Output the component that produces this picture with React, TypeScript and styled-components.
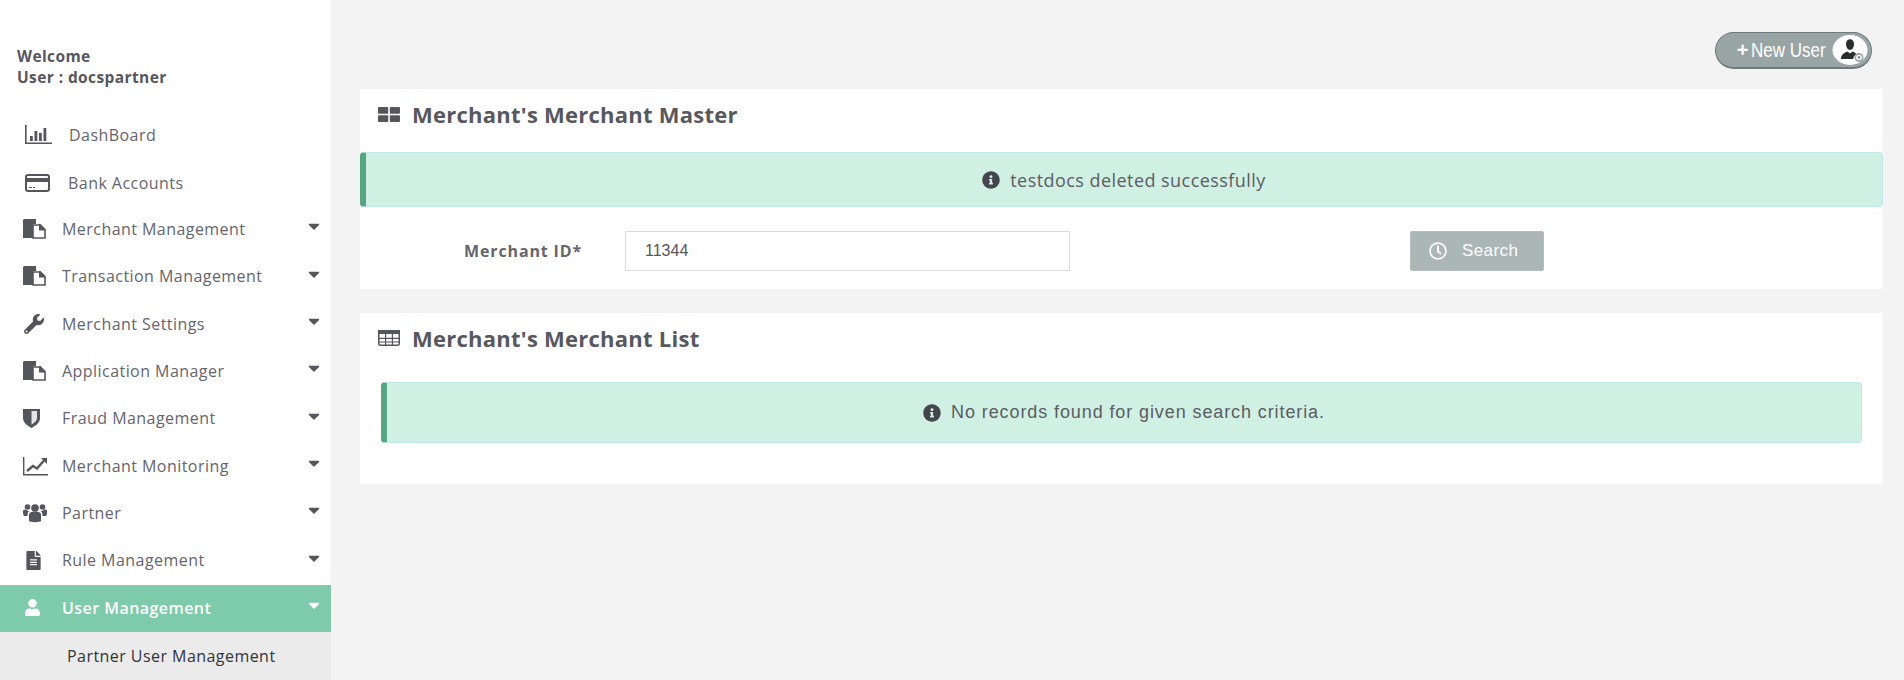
import styled, { createGlobalStyle } from 'styled-components'
import { FaCaretDown, FaInfoCircle, FaUser, FaWrench, FaFileAlt, FaRegClock } from 'react-icons/fa'

const GlobalStyle = createGlobalStyle`
html, body {
  margin: 0;
  padding: 0;
  height: 680px;
  overflow: hidden;
  background: #f3f3f3;
  font-family: 'Open Sans', sans-serif;
}
* { box-sizing: border-box; }
`

const Page = styled.div`
display: flex;
width: 1904px;
height: 680px;
overflow: hidden;
`

const Sidebar = styled.aside`
width: 331px;
flex: none;
background: #fff;
padding-top: 46px;
color: #5e5e66;
`

const Welcome = styled.div`
padding-left: 17px;
height: 65.5px;
font-size: 15.5px;
font-weight: 700;
letter-spacing: 0.4px;
line-height: 21px;
color: #575760;
`

const NavRow = styled.div<{ $active?: boolean; $flat: boolean; $textX: number; $iconX: number }>`
height: 47.35px;
display: flex;
align-items: center;
position: relative;
padding: 0 0 ${p => (p.$flat ? 0 : 2)}px ${p => p.$iconX}px;
font-size: 16px;
letter-spacing: 0.45px;
background: ${p => (p.$active ? '#7dcbaa' : 'transparent')};
color: ${p => (p.$active ? '#fff' : '#65656d')};
font-weight: ${p => (p.$active ? 600 : 400)};
.label {
  position: absolute;
  left: ${p => p.$textX}px;
}
.caret {
  position: absolute;
  left: 305px;
  top: 11px;
  font-size: 18px;
  color: ${p => (p.$active ? '#fff' : '#55555c')};
}
`

const SubRow = styled.div`
height: 48px;
background: #ebebeb;
padding: 0 0 0 67px;
display: flex;
align-items: center;
font-size: 16px;
letter-spacing: 0.45px;
color: #33333a;
`

const Main = styled.main`
flex: 1;
padding: 32px 21px 0 29px;
display: flex;
flex-direction: column;
`

const TopBar = styled.div`
height: 57px;
display: flex;
justify-content: flex-end;
padding-right: 11px;
flex: none;
`

const NewUserButton = styled.button`
width: 157px;
height: 37px;
padding: 0 3px 0 18px;
border: 1px solid #6f7a7a;
border-bottom-width: 2px;
border-radius: 19px;
background: #99a5a4;
color: #fff;
display: flex;
align-items: center;
font-family: 'Liberation Sans', sans-serif;
font-size: 20px;
.plus {
  font-weight: 700;
  width: 17px;
}
.text {
  display: inline-block;
  width: 81px;
  text-align: left;
  white-space: nowrap;
  transform: scaleX(0.85);
  transform-origin: left center;
}
svg { flex: none; }
`

const Panel = styled.section`
background: #fff;
margin-bottom: 24px;
`

const PanelHeader = styled.h2<{ $height: number; $pull: number }>`
margin: 0;
height: ${p => p.$height}px;
padding: 0 0 ${p => p.$pull}px 18px;
display: flex;
align-items: center;
gap: 12px;
font-size: 22px;
font-weight: 700;
letter-spacing: 0.25px;
color: #58585e;
svg { flex: none; }
`

const Alert = styled.div<{ $inset?: boolean; $sans?: boolean }>`
height: ${p => (p.$inset ? 61 : 55)}px;
margin: ${p => (p.$inset ? '0 21px 41px 21px' : '0')};
background: #d1f0e4;
border: 1px solid #bfe8ea;
border-left: 6px solid #57a683;
border-radius: 4px;
display: flex;
align-items: center;
justify-content: center;
gap: 10px;
color: #5c5c62;
font-family: ${p => (p.$sans ? "'Liberation Sans', sans-serif" : "'Open Sans', sans-serif")};
font-size: 18px;
letter-spacing: ${p => (p.$sans ? 0.9 : 0.45)}px;
svg { color: #45454d; font-size: 18px; flex: none; }
`

const FormRow = styled.div`
height: 82px;
padding-top: 24px;
display: flex;
align-items: flex-start;
`

const FieldLabel = styled.label`
width: 222px;
height: 40px;
line-height: 40px;
text-align: right;
font-size: 16px;
font-weight: 700;
letter-spacing: 0.85px;
color: #66666c;
`

const TextInput = styled.input`
margin-left: 43px;
width: 445px;
height: 40px;
padding: 0 19px;
border: 1px solid #dcdcdc;
background: #fff;
font-family: 'Liberation Sans', sans-serif;
font-size: 16px;
color: #55555c;
`

const SearchButton = styled.button`
margin-left: 340px;
width: 134px;
height: 40px;
border: 1px solid #b4bebe;
border-radius: 2px;
background: #abb7b7;
color: #fff;
display: flex;
align-items: center;
padding: 0 0 0 18px;
gap: 15px;
font-family: 'Liberation Sans', sans-serif;
font-size: 17px;
letter-spacing: 0.4px;
svg { font-size: 18px; }
`

const BarsIcon = () => (
  <svg width="27" height="20" viewBox="0 0 27 20">
    <path fill="#55555c" d="M0 0h1.6v17.500H27v1.600H0zM5 11h2.800v5H5zM9.500 6h2.800v10H9.500zM14 8h2.800v8H14zM18.500 3h2.800v13h-2.800z" />
  </svg>
)

const CardIcon = () => (
  <svg width="25" height="18" viewBox="0 0 25 18">
    <rect x="1" y="1" width="23" height="16" rx="2" fill="none" stroke="#55555c" strokeWidth="2" />
    <path fill="#55555c" d="M1 4h23v4H1zM4 13h3v1H4zM8 13h2v1H8z" />
  </svg>
)

const FilesIcon = () => (
  <svg width="23" height="20" viewBox="0 0 23 20">
    <path fill="#55555c" d="M1 0h12v5H10v14H0V1z" />
    <path fill="#fff" stroke="#55555c" strokeWidth="1.6" d="M10 6h7l5 5v8H10z" />
    <path fill="#55555c" d="M16 5h1.500l5 5v1.500H16z" />
  </svg>
)

const ShieldIcon = () => (
  <svg width="17" height="20" viewBox="0 0 17 20">
    <path fill="#55555c" d="M0 1h17v9c0 5-5 8-8.500 10C5 18 0 15 0 10z" />
    <path fill="#e6e6e8" d="M8.500 3H14v7c0 3-3 5-5.500 6.500z" />
  </svg>
)

const LineIcon = () => (
  <svg width="25" height="20" viewBox="0 0 25 20">
    <path fill="#55555c" d="M0 1h1.400v17H25v1.600H0z" />
    <path fill="none" stroke="#55555c" strokeWidth="2.400" d="M4 15l6-5 4 2.500 7-8" />
    <path fill="#55555c" d="M18 2h6v6z" />
  </svg>
)

const UsersIcon = () => (
  <svg width="24" height="20" viewBox="0 0 24 20">
    <g fill="#55555c">
      <circle cx="12" cy="5" r="3.800" />
      <circle cx="4.500" cy="4" r="2.800" />
      <circle cx="19.500" cy="4" r="2.800" />
      <path d="M6 11c1-2 3-2.600 6-2.600s5 .6 6 2.600v7c-2 1.500-10 1.500-12 0z" />
      <path d="M0 8c0-1 1-1.500 3-1.500 1 1 2 1.500 3.500 1.500C5 9 4.500 10 4.500 13H1C0 12 0 10 0 8zM24 8c0-1-1-1.500-3-1.500-1 1-2 1.500-3.500 1.500 1.500 1 2 2 2 5H23c1-1 1-3 1-5z" />
    </g>
  </svg>
)

const GridIcon = () => (
  <svg width="22" height="15" viewBox="0 0 22 15">
    <g fill="#55555c">
      <rect width="10.200" height="6.800" rx="1" />
      <rect x="11.800" width="10.200" height="6.800" rx="1" />
      <rect y="8.200" width="10.200" height="6.800" rx="1" />
      <rect x="11.800" y="8.200" width="10.200" height="6.800" rx="1" />
    </g>
  </svg>
)

const TableIcon = () => (
  <svg width="22" height="16" viewBox="0 0 22 16">
    <rect x=".75" y=".75" width="20.500" height="14.500" rx="1.500" fill="none" stroke="#55555c" strokeWidth="1.500" />
    <path fill="#55555c" d="M0 0h22v4H0zM7 4h1.200v11H7zM13.800 4H15v11h-1.200zM1 7.800h20V9H1zM1 11.400h20v1.200H1z" />
  </svg>
)

const UserBadge = () => (
  <svg width="36" height="30" viewBox="0 0 36 30">
    <ellipse cx="18" cy="15" rx="17.500" ry="15" fill="#fff" />
    <path fill="#2a2d2e" d="M14 9c0-3 1.800-4.800 4-4.800s4 1.800 4 4.800-1.800 6-4 6-4-3-4-6z" />
    <path fill="#2a2d2e" d="M9 24c0-4 2.500-6 6.500-7.500l2.500 2 2.500-2c1.500.5 3 1.300 4 2.500-2 1-3.200 3-3.200 5z" />
    <circle cx="27" cy="22.500" r="4.500" fill="#9ba5a5" />
    <circle cx="27" cy="22.500" r="2.800" fill="#fff" />
    <circle cx="27" cy="22.500" r="1.400" fill="#8b9595" />
  </svg>
)

const menu = [
  { label: 'DashBoard', icon: <BarsIcon />, iconX: 25, textX: 69 },
  { label: 'Bank Accounts', icon: <CardIcon />, iconX: 25, textX: 68 },
  { label: 'Merchant Management', icon: <FilesIcon />, iconX: 23, textX: 62, caret: true },
  { label: 'Transaction Management', icon: <FilesIcon />, iconX: 23, textX: 62, caret: true },
  { label: 'Merchant Settings', icon: <FaWrench size={20} color="#55555c" />, iconX: 24, textX: 62, caret: true },
  { label: 'Application Manager', icon: <FilesIcon />, iconX: 23, textX: 62, caret: true },
  { label: 'Fraud Management', icon: <ShieldIcon />, iconX: 23, textX: 62, caret: true },
  { label: 'Merchant Monitoring', icon: <LineIcon />, iconX: 23, textX: 62, caret: true },
  { label: 'Partner', icon: <UsersIcon />, iconX: 23, textX: 62, caret: true },
  { label: 'Rule Management', icon: <FaFileAlt size={19} color="#55555c" />, iconX: 24, textX: 62, caret: true },
  { label: 'User Management', icon: <FaUser size={17} color="#fff" />, iconX: 24, textX: 62, caret: true, active: true },
]

export default function App() {
  return (
    <Page>
      <GlobalStyle />
      <Sidebar>
        <Welcome>
          Welcome
          <br />
          User : docspartner
        </Welcome>
        {menu.map(item => (
          <NavRow key={item.label} $active={item.active} $flat={!item.caret} $iconX={item.iconX} $textX={item.textX}>
            {item.icon}
            <span className="label">{item.label}</span>
            {item.caret && <FaCaretDown className="caret" />}
          </NavRow>
        ))}
        <SubRow>Partner User Management</SubRow>
      </Sidebar>
      <Main>
        <TopBar>
          <NewUserButton>
            <span className="plus">+</span>
            <span className="text">New User</span>
            <UserBadge />
          </NewUserButton>
        </TopBar>
        <Panel>
          <PanelHeader $height={63} $pull={13}>
            <GridIcon />
            Merchant's Merchant Master
          </PanelHeader>
          <Alert>
            <FaInfoCircle />
            testdocs deleted successfully
          </Alert>
          <FormRow>
            <FieldLabel>Merchant ID*</FieldLabel>
            <TextInput defaultValue="11344" />
            <SearchButton>
              <FaRegClock />
              Search
            </SearchButton>
          </FormRow>
        </Panel>
        <Panel>
          <PanelHeader $height={69} $pull={19}>
            <TableIcon />
            Merchant's Merchant List
          </PanelHeader>
          <Alert $inset $sans>
            <FaInfoCircle />
            No records found for given search criteria.
          </Alert>
        </Panel>
      </Main>
    </Page>
  )
}
